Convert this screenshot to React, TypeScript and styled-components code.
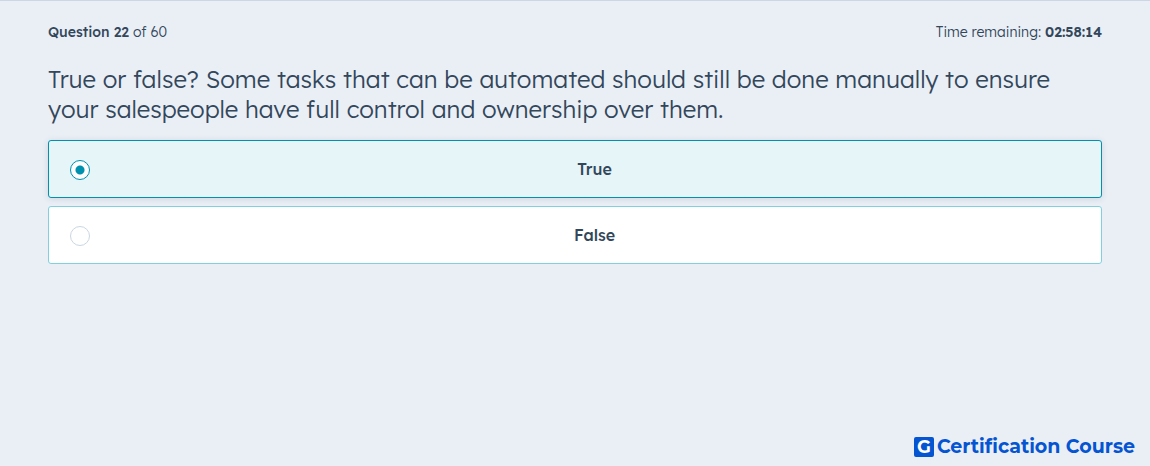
import React, { useState } from "react";
import styled, { createGlobalStyle } from "styled-components";

const GlobalStyle = createGlobalStyle`
  *, *::before, *::after { box-sizing: border-box; }
  body {
    margin: 0;
    background: #eaeff6;
    color: #33475b;
    font-family: Lexend, "Lexend Deca", Inter, "Liberation Sans", sans-serif;
    font-size: 14px;
    line-height: 20px;
    font-weight: 300;
  }
`;

const Page = styled.div`
  display: flex;
  flex-direction: column;
  min-height: 100vh;
  border-top: 1px solid #cbd6e6;
`;

const Main = styled.main`
  flex: 1;
  padding: 21px 48px 24px;
`;

const StatusBar = styled.header`
  display: flex;
  justify-content: space-between;
  gap: 24px;
`;

const Status = styled.p`
  margin: 0;
`;

const Strong = styled.strong<{ $weight: number }>`
  font-weight: ${({ $weight }) => $weight};
`;

const Quiz = styled.fieldset`
  margin: 0;
  padding: 0;
  border: 0;
  min-width: 0;
`;

const Prompt = styled.legend`
  padding: 22px 0 16px;
  font-size: 24px;
  line-height: 30px;
`;

const Options = styled.div`
  display: flex;
  flex-direction: column;
  gap: 8px;
`;

const Option = styled.label<{ $selected: boolean }>`
  display: flex;
  align-items: center;
  gap: 18px;
  min-height: 58px;
  padding: 0 20px;
  border: 1px solid ${({ $selected }) => ($selected ? "#0091ae" : "#7fd1de")};
  border-radius: 3px;
  background: ${({ $selected }) => ($selected ? "#e5f5f8" : "#ffffff")};
  box-shadow: ${({ $selected }) =>
    $selected ? "0 1px 6px rgba(45, 62, 80, 0.14)" : "none"};
  cursor: pointer;
`;

const Radio = styled.input`
  appearance: none;
  flex: none;
  width: 20px;
  height: 20px;
  margin: 1px 0 0 1px;
  border: 1px solid #cbd6e2;
  border-radius: 50%;
  background: #ffffff;

  &:checked {
    border-color: #0091ae;
    background: radial-gradient(circle, #0091ae 4px, #ffffff 5px);
  }
`;

const OptionText = styled.span`
  flex: 1;
  font-size: 16px;
  line-height: 24px;
  font-weight: 500;
  text-align: center;
`;

const Footer = styled.footer`
  display: flex;
  justify-content: flex-end;
  align-items: center;
  gap: 3px;
  padding: 0 15px 7px;
  color: #0554d1;
`;

const Badge = styled.span`
  display: grid;
  place-items: center;
  width: 20px;
  height: 20px;
  border-radius: 2px;
  background: #0554d1;
  color: #ffffff;
  font-family: Montserrat, Inter, "Liberation Sans", sans-serif;
  font-size: 18px;
  font-weight: 700;
`;

const Brand = styled.span`
  font-family: Montserrat, Inter, "Liberation Sans", sans-serif;
  font-size: 19px;
  line-height: 24px;
  font-weight: 700;
`;

const choices = ["True", "False"];

export default function App() {
  const [answer, setAnswer] = useState("True");

  return (
    <Page>
      <GlobalStyle />
      <Main>
        <StatusBar>
          <Status>
            <Strong $weight={500}>Question 22</Strong> of 60
          </Status>
          <Status>
            Time remaining: <Strong $weight={600}>02:58:14</Strong>
          </Status>
        </StatusBar>
        <Quiz>
          <Prompt>
            True or false? Some tasks that can be automated should still be done
            manually to ensure your salespeople have full control and ownership
            over them.
          </Prompt>
          <Options>
            {choices.map((choice) => (
              <Option key={choice} $selected={answer === choice}>
                <Radio
                  type="radio"
                  name="answer"
                  value={choice}
                  checked={answer === choice}
                  onChange={() => setAnswer(choice)}
                />
                <OptionText>{choice}</OptionText>
              </Option>
            ))}
          </Options>
        </Quiz>
      </Main>
      <Footer>
        <Badge>G</Badge>
        <Brand>Certification Course</Brand>
      </Footer>
    </Page>
  );
}
